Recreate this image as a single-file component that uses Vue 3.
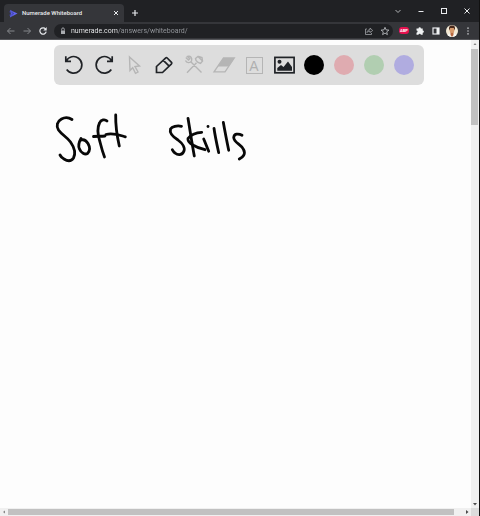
<script setup>
import { ref } from 'vue'

const address = ref('numerade.com/answers/whiteboard/')
const activeColor = ref('black')

const colors = [
  { name: 'black', value: '#000000' },
  { name: 'pink', value: '#dfabb0' },
  { name: 'green', value: '#b1ceb1' },
  { name: 'violet', value: '#b0ace0' },
]

// Pen strokes on the board, in board coordinates
const strokes = [
  'M72 79.500C69 77.500 65 77 61.500 79C57 81.500 56 86 58.500 90C62 95 67 97 70.500 102C74 107 76 113 73.500 118C71 122 67 121 64 119C62 118 61 117 60 115',
  'M81 98.500C79 102 78 106 79.500 109C81 113 85 115 87.500 113.500C90 111 90 107 88 103.500C86 100.500 84 99 81.500 100',
  'M107 81C105 79 101 79.500 99.500 83C97 88 98 96 100 102C101.500 108 103 113 104.500 117',
  'M93.500 96.500C97 96 101 96.500 105 96',
  'M115.700 75C115.500 85 117 96 119.300 106',
  'M106 94.500C113 92.500 119 95 125.300 96.800',
  'M181.500 86.300C177 85.300 172 86.500 170.500 89C169 94 174 97.500 178 100C182 103 186 108 183.500 112C181.500 115.500 177.500 115 175 113C173.500 112 173 111 172.300 109.700',
  'M188 78.300C190 90 192 104 194.300 116',
  'M201.700 92.300C196 92.500 190 95 188 98.500C187 103 196 107.500 205 109.700',
  'M203.700 99L208.700 111.300',
  'M208 86.300L208 86.600',
  'M214 88.300C215 96 217 105 218.700 112.700',
  'M223.300 82.300C225 92 227 102 228.700 110.300',
  'M242 95.300C238 93 234 94 233.700 97.500C234 103 241 104 243.500 109.500C246 114 243 117 239.300 119',
]
</script>

<template>
  <div class="window">
    <header class="tabs">
      <div class="tab">
        <svg class="logo" viewBox="0 0 10 10" aria-hidden="true">
          <path d="M1 1L9.500 5L1 9.500L2 5Z" fill="#6266ee" />
          <path d="M0 3L5 5L0 7M2 1L5 5L2 9" stroke="#3c3fae" stroke-width=".7" fill="none" />
        </svg>
        <span class="tab-title">Numerade Whiteboard</span>
        <button class="small" aria-label="Close tab">
          <svg viewBox="0 0 10 10"><path d="M3 3L7 7M7 3L3 7" /></svg>
        </button>
      </div>
      <button class="small new-tab" aria-label="New tab">
        <svg viewBox="0 0 10 10"><path d="M5 2V8M2 5H8" stroke-width="1.2" /></svg>
      </button>
      <div class="controls">
        <button class="small" aria-label="Search tabs">
          <svg viewBox="0 0 10 10"><path d="M2.500 4L5 6.500L7.500 4" stroke="#b0b2b5" /></svg>
        </button>
        <button class="small" aria-label="Minimize">
          <svg viewBox="0 0 10 10"><path d="M2.500 5.500H7.500" /></svg>
        </button>
        <button class="small" aria-label="Maximize">
          <svg viewBox="0 0 10 10"><rect x="2.500" y="2.500" width="5" height="5" /></svg>
        </button>
        <button class="small" aria-label="Close window">
          <svg viewBox="0 0 10 10"><path d="M2.500 2.500L7.500 7.500M7.500 2.500L2.500 7.500" /></svg>
        </button>
      </div>
    </header>

    <nav class="bar">
      <div class="history">
        <button class="small" aria-label="Back">
          <svg viewBox="0 0 10 10"><path d="M8.500 5H1.500M4.500 2L1.500 5L4.500 8" stroke="#85878b" /></svg>
        </button>
        <button class="small" aria-label="Forward">
          <svg viewBox="0 0 10 10"><path d="M1.500 5H8.500M5.500 2L8.500 5L5.500 8" stroke="#85878b" /></svg>
        </button>
        <button class="small" aria-label="Reload">
          <svg viewBox="0 0 10 10">
            <path d="M7.600 3A3.200 3.200 0 1 0 8.200 5.700" stroke-width="1.200" />
            <path d="M8.700 1V4.400H5.300Z" fill="#e8eaed" stroke="none" />
          </svg>
        </button>
      </div>
      <div class="address">
        <svg class="lock" viewBox="0 0 10 10" aria-hidden="true">
          <rect x="3" y="4.500" width="4" height="3.500" fill="#a9acb0" />
          <path d="M3.700 4.500V3.200A1.300 1.300 0 0 1 6.300 3.200V4.500" fill="none" stroke="#a9acb0" stroke-width=".9" />
        </svg>
        <input v-model="address" type="text" aria-label="Address" spellcheck="false" />
        <button class="small" aria-label="Share">
          <svg viewBox="0 0 10 10">
            <path d="M3 3H1.500V8.500H7.500V7M3 6.500C3.300 4.500 4.500 3.700 6 3.700V2L8.700 4.500L6 6.500V5.200C4.600 5.200 3.800 5.500 3 6.500Z" stroke="#a0a2a6" stroke-width=".8" />
          </svg>
        </button>
        <button class="small" aria-label="Bookmark">
          <svg viewBox="0 0 10 10">
            <path d="M5 1.300L6.100 3.900L8.900 4.100L6.700 5.900L7.400 8.600L5 7.100L2.600 8.600L3.300 5.900L1.100 4.100L3.900 3.900Z" stroke="#c4c6ca" stroke-width=".8" />
          </svg>
        </button>
      </div>
      <div class="extensions">
        <button class="small" aria-label="Ad blocker"><span class="abp">ABP</span></button>
        <button class="small" aria-label="Extensions">
          <svg viewBox="0 0 10 10">
            <path d="M1.500 2.500H3.500A1.200 1.200 0 0 1 5.900 2.500H7.700V4.400A1.200 1.200 0 0 1 7.700 6.800V8.800H5.800A1.100 1.100 0 0 0 3.500 8.800H1.500V6.700A1.100 1.100 0 0 0 1.500 4.500Z" fill="#f1f3f4" stroke="none" />
          </svg>
        </button>
        <button class="small" aria-label="Side panel">
          <svg viewBox="0 0 10 10">
            <rect x="2" y="2" width="6" height="6" stroke-width="1.200" />
            <path d="M5.500 2H8V8H5.500Z" fill="#f1f3f4" stroke="none" />
          </svg>
        </button>
        <button class="small" aria-label="Profile">
          <svg class="avatar" viewBox="0 0 12 12">
            <circle cx="6" cy="6" r="6" fill="#f4ead6" stroke="none" />
            <path d="M1.500 10C2 7.500 10 7.500 10.500 10C8 12.500 4 12.500 1.500 10Z" fill="#f8f8f4" stroke="none" />
            <path d="M4.500 7H7.500V10L6 12L4.500 10Z" fill="#b8683f" stroke="none" />
            <ellipse cx="6" cy="5" rx="2.400" ry="2.900" fill="#d79a6b" stroke="none" />
            <path d="M3.200 5.500C2.300 1 4.500 .3 6 .5C8 .3 9.700 1.500 8.800 5.500L7.800 3H4.200Z" fill="#4a2a1c" stroke="none" />
          </svg>
        </button>
        <button class="small" aria-label="Menu">
          <svg viewBox="0 0 10 10"><path d="M5 1.500V2.700M5 4.400V5.600M5 7.300V8.500" stroke-width="1.300" /></svg>
        </button>
      </div>
    </nav>

    <div class="viewport">
      <main class="board">
        <svg class="ink" role="img" aria-label="Soft skills">
          <path v-for="(d, i) in strokes" :key="i" :d="d" />
        </svg>
        <div class="tools">
          <button class="tool" aria-label="Undo">
            <svg viewBox="0 0 24 24"><path d="M3.800 3.300V8.300H9M4.200 8A8.300 8.300 0 1 1 4.700 16.500" /></svg>
          </button>
          <button class="tool" aria-label="Redo">
            <svg viewBox="0 0 24 24"><path d="M20.200 3.300V8.300H15M19.800 8A8.300 8.300 0 1 0 19.300 16.500" /></svg>
          </button>
          <button class="tool muted" aria-label="Select">
            <svg viewBox="0 0 24 24"><path d="M7.500 4L17.500 13L13 13.500L16 19L13.500 20.300L10.700 14.800L8 17.500Z" /></svg>
          </button>
          <button class="tool" aria-label="Pen">
            <svg viewBox="0 0 24 24">
              <path d="M4.500 19.500V13.500L13.800 4.900Q14.500 4.300 15.200 5L19.500 9.300Q20.200 10 19.500 10.800L10.500 19.500ZM11.300 7.300L17.200 13.200" />
            </svg>
          </button>
          <button class="tool muted" aria-label="Tools">
            <svg viewBox="0 0 24 24">
              <path d="M9 9L19.500 19.500M14.500 9.800L5 19.800M3.800 4.500L6.500 7L7.800 5.700L5.500 3.500C8.500 2.500 10.500 5 9.500 8C8 10.500 4.500 10 3.500 7.500M13.500 5.500L16 3.500L20.500 8L18.500 10.500L16 9.500L14 7.500ZM16.500 3.500L20 4.500L20.500 8" />
            </svg>
          </button>
          <button class="tool muted" aria-label="Eraser">
            <svg viewBox="0 0 24 24">
              <path d="M11.500 5H22.300L13 18.800H2Z" stroke-width="1.300" />
              <path d="M11.500 5H22.300L16.500 13.500H5.700Z" fill="#b5b5b5" stroke="none" />
            </svg>
          </button>
          <button class="tool muted letter" aria-label="Text"><span>A</span></button>
          <button class="tool" aria-label="Image">
            <svg viewBox="0 0 24 24">
              <rect x="2.900" y="4.400" width="19.200" height="15.400" />
              <circle cx="7.500" cy="8.700" r="2" fill="#202327" stroke="none" />
              <path d="M5.300 17.800V15L9 12L11.500 14L16 8.500L20 14V17.800Z" fill="#202327" stroke="none" />
            </svg>
          </button>
          <button
            v-for="c in colors"
            :key="c.name"
            class="tool"
            :aria-label="c.name"
            :aria-pressed="activeColor === c.name"
            @click="activeColor = c.name"
          >
            <span class="swatch" :style="{ background: c.value }"></span>
          </button>
        </div>
      </main>
      <div class="scroll vertical" aria-hidden="true">
        <svg viewBox="0 0 8 8"><path d="M2.500 5H5.500L4 3Z" fill="#858585" /></svg>
        <div class="track"><div class="thumb"></div></div>
        <svg viewBox="0 0 8 8"><path d="M2 3H6L4 5.500Z" fill="#4a4a4a" /></svg>
      </div>
      <div class="scroll horizontal" aria-hidden="true">
        <svg viewBox="0 0 8 8"><path d="M5 2.500V5.500L3 4Z" fill="#858585" /></svg>
        <div class="track"><div class="thumb"></div></div>
        <svg viewBox="0 0 8 8"><path d="M3 2V6L5.500 4Z" fill="#4a4a4a" /></svg>
      </div>
      <div class="corner"></div>
    </div>
  </div>
</template>

<style>
body {
  margin: 0;
}
</style>

<style scoped>
.window {
  box-sizing: border-box;
  display: flex;
  flex-direction: column;
  min-height: 100vh;
  border-right: 1px solid #111;
  background: #202124;
  font-family: Roboto, "Open Sans", sans-serif;
}
button {
  padding: 0;
  border: 0;
  background: none;
  font: inherit;
  color: inherit;
}
.small {
  display: flex;
  align-items: center;
  justify-content: center;
  width: 16px;
  height: 16px;
}
.small svg {
  width: 10px;
  height: 10px;
  fill: none;
  stroke: #e8eaed;
  stroke-width: 1;
}
.tabs {
  display: flex;
  align-items: center;
  height: 22px;
  padding-left: 4px;
}
.tab {
  box-sizing: border-box;
  align-self: flex-end;
  display: flex;
  align-items: center;
  width: 120px;
  height: 18px;
  padding-left: 5px;
  border-radius: 4px 4px 0 0;
  background: #35363a;
}
.logo {
  width: 9px;
  height: 9px;
  margin-right: 4px;
}
.tab-title {
  flex: 1;
  font-size: 6px;
  font-weight: 500;
  line-height: 10px;
  color: #e8eaed;
  white-space: nowrap;
}
.new-tab {
  margin: 4px 0 0 3px;
}
.controls {
  display: flex;
  gap: 7px;
  margin-left: auto;
  padding-right: 4px;
}
.bar {
  display: flex;
  align-items: center;
  height: 17px;
  background: #35363a;
  border-bottom: 1px solid #55565a;
}
.history {
  display: flex;
  padding: 0 3px;
}
.address {
  flex: 1;
  display: flex;
  align-items: center;
  min-width: 0;
  height: 14px;
  padding-left: 4px;
  border-radius: 7px;
  background: #202124;
}
.lock {
  width: 10px;
  height: 10px;
  margin-right: 3px;
}
.address input {
  flex: 1;
  min-width: 0;
  height: 12px;
  padding: 0;
  border: 0;
  outline: 0;
  font: 7px/12px Roboto, "Open Sans", sans-serif;
  color: transparent;
  caret-color: #e8eaed;
  background: linear-gradient(90deg, #f4f5f7 47px, #96999e 47px);
  -webkit-background-clip: text;
  background-clip: text;
}
.extensions {
  display: flex;
  padding: 0 3px;
}
.abp {
  padding: 0 1px;
  border-radius: 3px;
  background: #e5114f;
  color: #fff;
  font-size: 4px;
  font-weight: 700;
  line-height: 7px;
}
.small .avatar {
  width: 12px;
  height: 12px;
}
.viewport {
  flex: 1;
  display: grid;
  grid-template-columns: 1fr 8px;
  grid-template-rows: 1fr 8px;
}
.board {
  position: relative;
  min-width: 0;
  padding: 5px 0 5px 7px;
  background: #fdfdfd;
}
.ink {
  position: absolute;
  inset: 0;
  width: 100%;
  height: 100%;
  fill: none;
  stroke: #080808;
  stroke-width: 2.8;
  stroke-linecap: round;
  stroke-linejoin: round;
}
.tools {
  position: relative;
  display: flex;
  align-items: center;
  width: fit-content;
  height: 40px;
  margin: 0 auto;
  padding: 0 5px;
  border-radius: 6px;
  background: #dddddd;
}
.tool {
  display: flex;
  align-items: center;
  justify-content: center;
  width: 30px;
  height: 30px;
}
.tool svg {
  width: 24px;
  height: 24px;
  fill: none;
  stroke: #202327;
  stroke-width: 1.7;
}
.muted svg {
  stroke: #b5b5b5;
  stroke-width: 1.4;
}
.letter span {
  width: 15px;
  height: 15px;
  border: 1px solid #b5b5b5;
  color: #b0b0b0;
  font: 14px/16px "Liberation Sans", sans-serif;
  text-align: center;
}
.swatch {
  width: 20px;
  height: 20px;
  border-radius: 50%;
}
.scroll {
  display: flex;
  background: #f0f0f0;
}
.scroll svg {
  flex: none;
  width: 8px;
  height: 8px;
}
.vertical {
  flex-direction: column;
}
.track {
  flex: 1;
  min-height: 0;
}
.thumb {
  background: #c1c1c1;
}
.vertical .thumb {
  height: 76px;
  margin: 1px 1px 0 0;
}
.horizontal .thumb {
  width: 98%;
  height: 6px;
  margin-top: 1px;
}
.corner {
  background: #dcdcdc;
}
</style>
